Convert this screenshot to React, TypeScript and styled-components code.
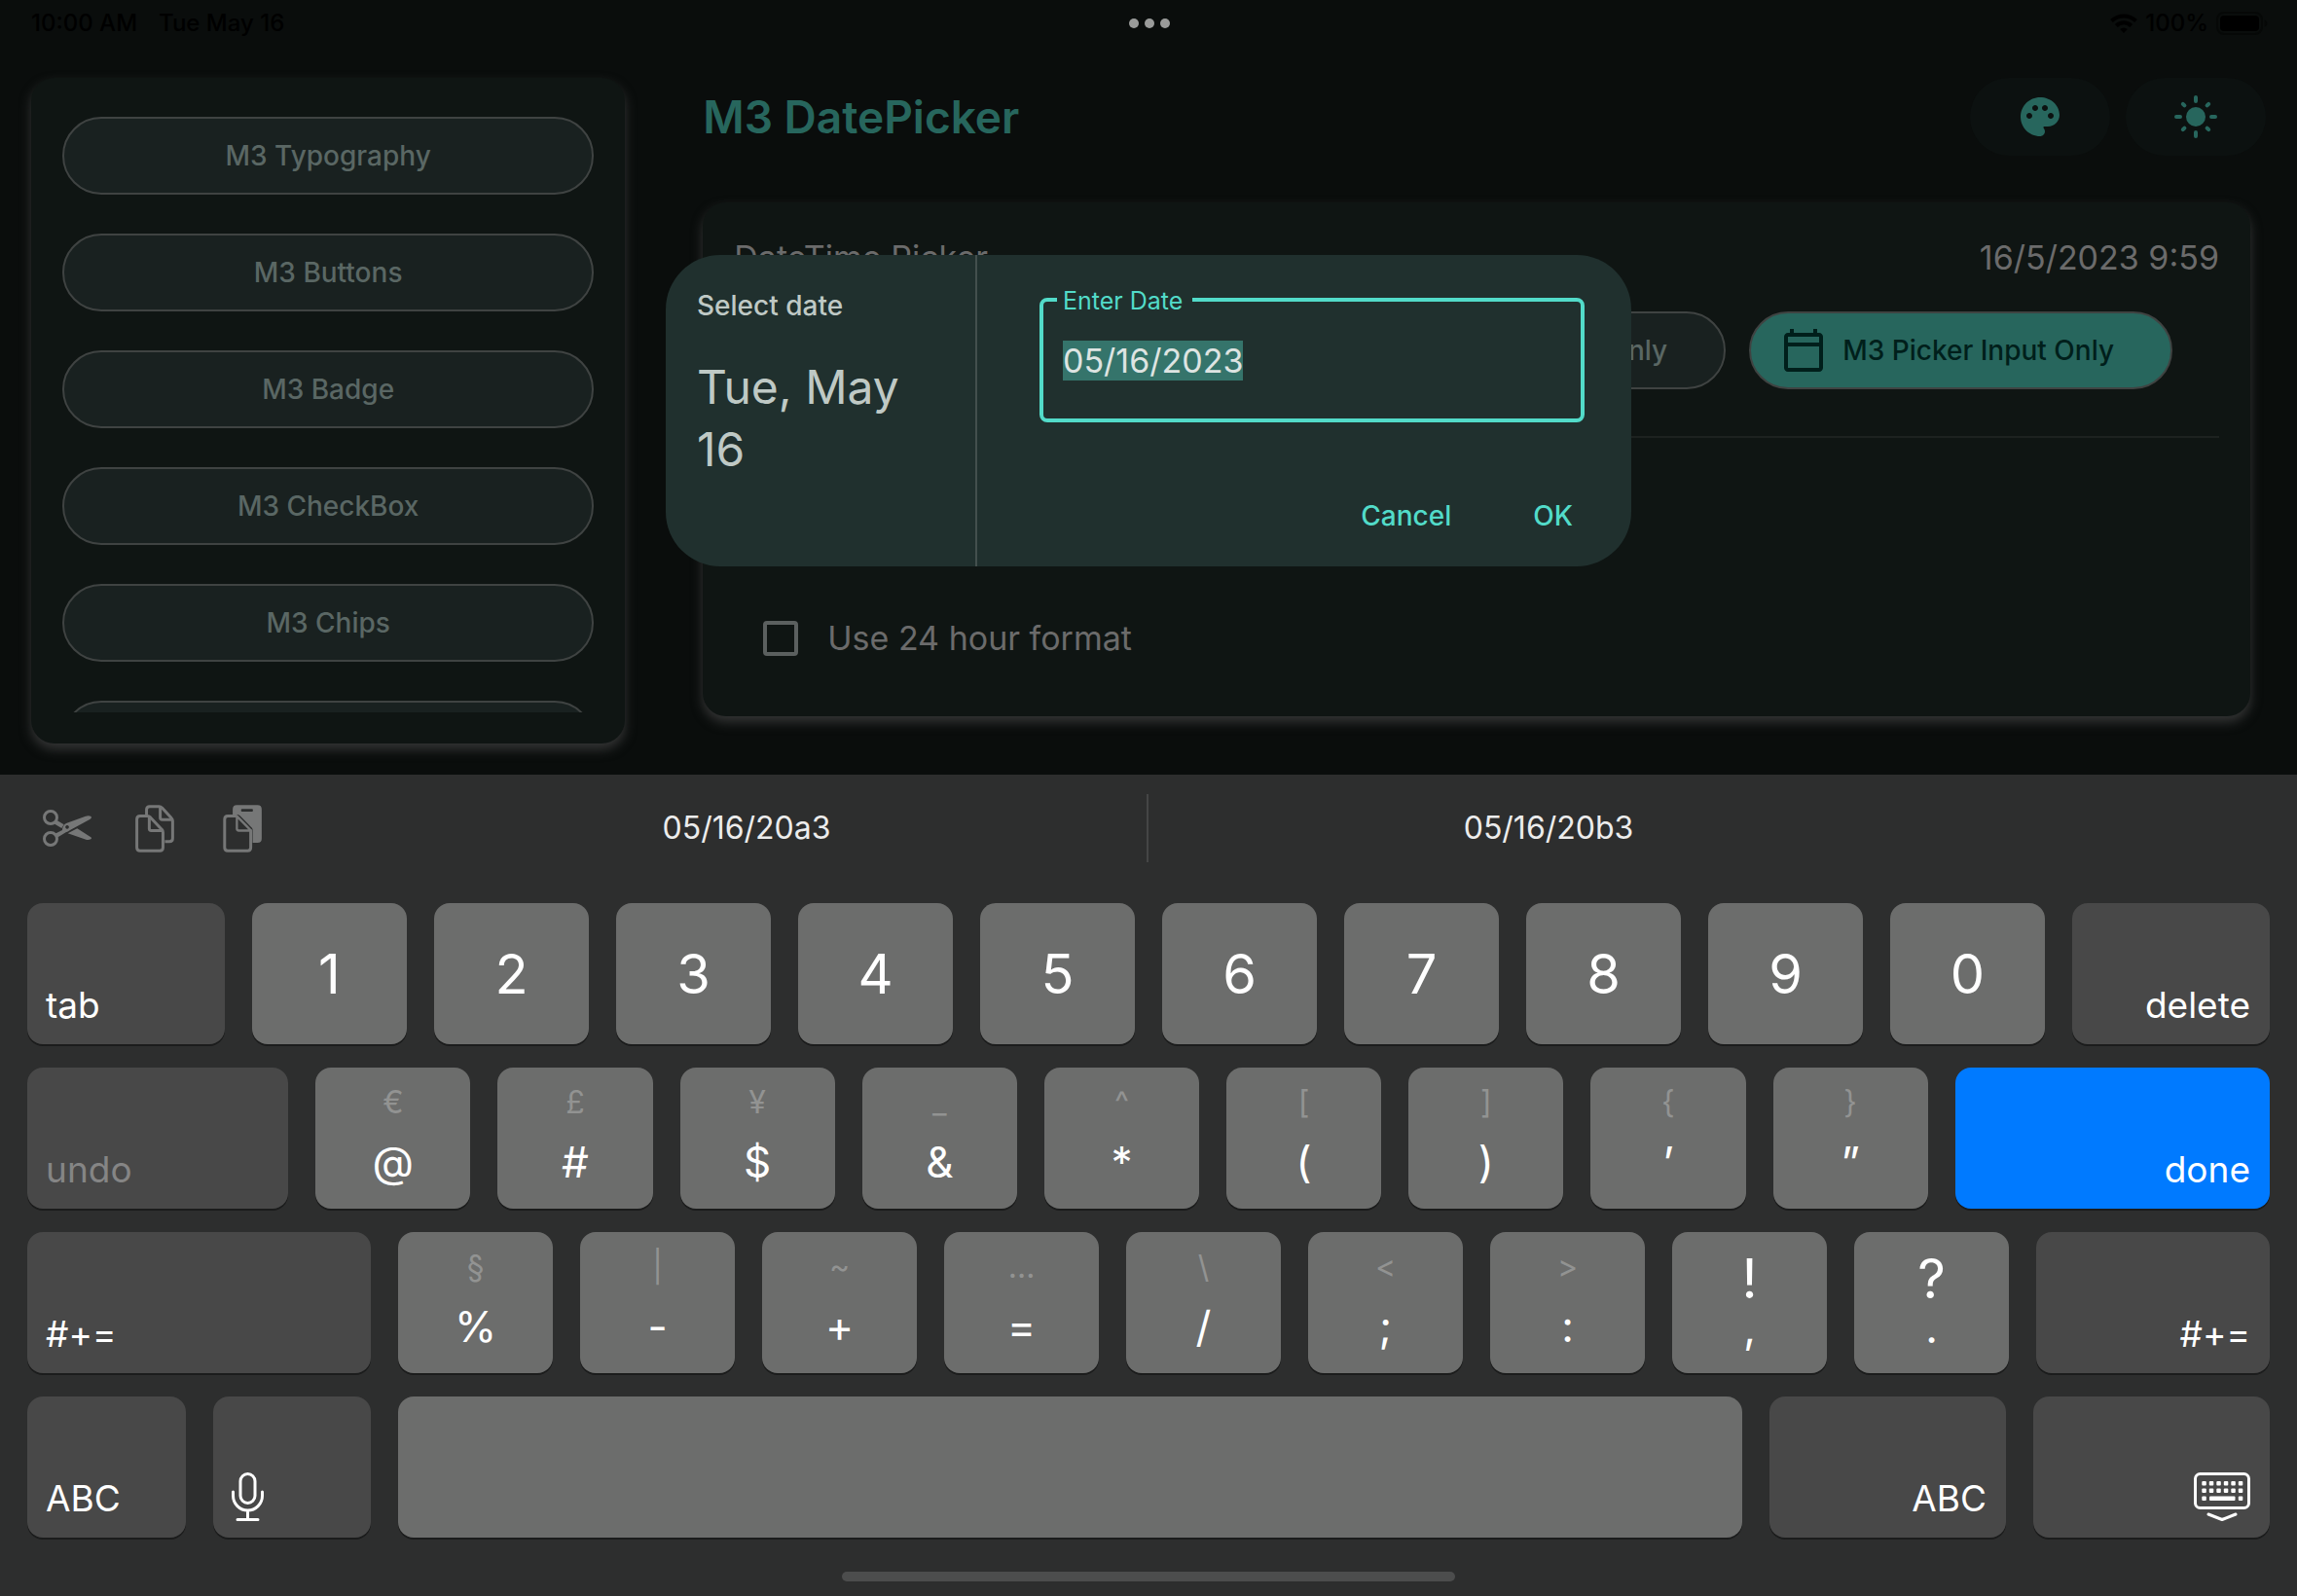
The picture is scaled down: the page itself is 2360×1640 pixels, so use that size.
import React, { useEffect, useRef } from "react";
import styled, { createGlobalStyle, css } from "styled-components";

const color = {
  page: "#0a0d0c",
  card: "#0f1513",
  pill: "#192120",
  outline: "#3f4342",
  muted: "#5a6764",
  body: "#6b6b6b",
  teal: "#27665d",
  onTeal: "#001f1b",
  dialog: "#20302e",
  accent: "#52dbc9",
  dialogText: "#bfc9c5",
  keyboard: "#2d2e2e",
  keyLight: "#6c6d6c",
  keyDark: "#484848",
};

const GlobalStyle = createGlobalStyle`
  * { box-sizing: border-box; }
  body {
    margin: 0;
    background: ${color.page};
    font-family: Inter, Roboto, "Liberation Sans", sans-serif;
  }
  button, input { font-family: inherit; }
  button { margin: 0; border: 0; padding: 0; cursor: pointer; }
`;

const Screen = styled.div`
  position: relative;
  display: grid;
  grid-template-rows: minmax(0, 1fr) auto;
  height: 100vh;
  overflow: hidden;
`;

const AppArea = styled.div`
  position: relative;
  display: flex;
  flex-direction: column;
  min-height: 0;
`;

/* Status bar */

const StatusBar = styled.header`
  display: grid;
  grid-template-columns: 1fr auto 1fr;
  align-items: center;
  height: 48px;
  padding: 0 30px 0 32px;
  color: #000;
  font-size: 24px;
  font-weight: 500;
  line-height: 32px;
`;

const StatusGroup = styled.div<{ $end?: boolean }>`
  display: flex;
  align-items: center;
  gap: ${(p) => (p.$end ? "8px" : "22px")};
  justify-content: ${(p) => (p.$end ? "flex-end" : "flex-start")};
`;

const Dots = styled.div`
  display: flex;
  gap: 6px;
  i {
    width: 10px;
    height: 10px;
    border-radius: 50%;
    background: #9a9b9a;
  }
`;

/* Page */

const Columns = styled.div`
  flex: 1;
  display: grid;
  grid-template-columns: 2fr 5fr;
  min-height: 0;
`;

const Sidebar = styled.nav`
  display: flex;
  min-height: 0;
  padding: 32px;
`;

const raised = css`
  background: ${color.card};
  border-radius: 24px;
  box-shadow: 0 6px 12px #343535;
`;

const SideCard = styled.div`
  ${raised}
  flex: 1;
  display: flex;
  min-height: 0;
  padding: 32px;
`;

const SideList = styled.div`
  flex: 1;
  display: flex;
  flex-direction: column;
  gap: 40px;
  padding-top: 8px;
  overflow: hidden;
`;

const Pill = styled.button<{ $selected?: boolean }>`
  display: flex;
  flex-shrink: 0;
  align-items: center;
  justify-content: center;
  gap: 16px;
  height: 80px;
  padding: 0 30px;
  border: 2px solid ${color.outline};
  border-radius: 40px;
  background: ${(p) => (p.$selected ? color.teal : color.pill)};
  color: ${(p) => (p.$selected ? color.onTeal : color.muted)};
  font-size: 28px;
  font-weight: 500;
  line-height: 40px;
  white-space: nowrap;
`;

const Chip = styled(Pill)`
  padding-right: 58px;
`;

const Main = styled.main`
  padding: 32px 48px;
`;

const PageHeader = styled.div`
  display: flex;
  align-items: center;
  gap: 16px;
  margin-right: -16px;
`;

const Title = styled.h1`
  flex: 1;
  margin: 0;
  color: ${color.teal};
  font-size: 46px;
  font-weight: 600;
  line-height: 56px;
`;

const IconButton = styled.button`
  display: flex;
  align-items: center;
  justify-content: center;
  width: 144px;
  height: 80px;
  border-radius: 40px;
  background: #0c1110;
  color: ${color.teal};
`;

const Panel = styled.section`
  ${raised}
  margin-top: 48px;
  padding: 32px;
`;

const PanelHead = styled.div`
  display: flex;
  justify-content: space-between;
  color: ${color.body};
  font-size: 34px;
  line-height: 50px;
`;

const ChipRow = styled.div`
  display: flex;
  justify-content: flex-end;
  gap: 24px;
  margin-top: 30px;
  padding-right: 48px;
`;

const Rule = styled.hr`
  height: 2px;
  margin: 48px 0 158px;
  border: 0;
  background: #1d2220;
`;

const CheckRow = styled.label`
  display: flex;
  align-items: center;
  gap: 30px;
  height: 96px;
  padding-left: 30px;
  color: ${color.body};
  font-size: 34px;
  line-height: 48px;
`;

const Checkbox = styled.input`
  appearance: none;
  width: 36px;
  height: 36px;
  margin: 0;
  border: 4px solid #5b605f;
  border-radius: 4px;
`;

/* Dialog */

const DialogLayer = styled.div`
  position: absolute;
  inset: 48px 0 0;
  display: flex;
  align-items: center;
  justify-content: center;
`;

const Dialog = styled.div`
  display: grid;
  grid-template-columns: 320px 1fr;
  width: min(992px, 100% - 64px);
  min-height: 320px;
  border-radius: 56px;
  background: ${color.dialog};
`;

const DialogSummary = styled.div`
  padding: 32px;
  border-right: 2px solid #434f4d;
  color: ${color.dialogText};
`;

const DialogCaption = styled.p`
  margin: 0 0 32px;
  font-size: 28px;
  font-weight: 500;
  line-height: 40px;
`;

const DialogDate = styled.p`
  margin: 0;
  font-size: 48px;
  line-height: 64px;
`;

const DialogForm = styled.form`
  display: flex;
  flex-direction: column;
  justify-content: space-between;
  padding: 44px 36px 16px 64px;
`;

const Field = styled.div`
  position: relative;
  margin-right: 12px;
`;

const FieldLabel = styled.label`
  position: absolute;
  top: -13px;
  left: 18px;
  padding: 0 10px 0 6px;
  background: ${color.dialog};
  color: ${color.accent};
  font-size: 25px;
  line-height: 32px;
`;

const FieldInput = styled.input`
  width: 100%;
  height: 128px;
  border: 4px solid ${color.accent};
  border-radius: 8px;
  padding: 0 20px;
  outline: none;
  background: transparent;
  color: #dee4e2;
  font-size: 34px;
  line-height: 38px;
  &::selection {
    background: #35746b;
    color: #dee4e2;
  }
`;

const DialogActions = styled.div`
  display: flex;
  justify-content: flex-end;
  gap: 36px;
`;

const TextButton = styled.button`
  height: 72px;
  padding: 0 24px;
  background: transparent;
  color: ${color.accent};
  font-size: 28px;
  font-weight: 500;
  line-height: 40px;
`;

/* Keyboard */

const Keyboard = styled.section`
  background: ${color.keyboard};
`;

const AssistBar = styled.div`
  display: grid;
  grid-template-columns: 356px 1fr 1fr 356px;
  align-items: center;
  height: 110px;
`;

const AssistTools = styled.div`
  display: flex;
  gap: 40px;
  padding-left: 44px;
`;

const ToolButton = styled.button`
  display: flex;
  align-items: center;
  justify-content: center;
  width: 50px;
  height: 50px;
  background: transparent;
  color: #767777;
`;

const Suggestion = styled.button<{ $divided?: boolean }>`
  height: 70px;
  border-right: 2px solid ${(p) => (p.$divided ? "#454646" : "transparent")};
  background: transparent;
  color: #ececec;
  font-size: 32px;
  line-height: 44px;
`;

const Keys = styled.div`
  display: grid;
  gap: 24px;
  padding: 22px 28px 35px;
`;

const KeyRow = styled.div<{ $columns: string }>`
  display: grid;
  grid-template-columns: ${(p) => p.$columns};
  gap: 28px;
`;

const keyBase = css`
  height: 145px;
  border-radius: 16px;
  box-shadow: 0 2px 0 #1b1c1c;
  color: #fff;
`;

const CharKey = styled.button`
  ${keyBase}
  background: ${color.keyLight};
  font-size: 56px;
  font-weight: 400;
  line-height: 64px;
`;

const DualKey = styled.button<{ $strong?: boolean }>`
  ${keyBase}
  display: grid;
  grid-template-rows: ${(p) => (p.$strong ? "60px 40px" : "44px 60px")};
  row-gap: ${(p) => (p.$strong ? "0" : "9px")};
  justify-items: center;
  align-content: start;
  padding-top: ${(p) => (p.$strong ? "18px" : "14px")};
  background: ${color.keyLight};
`;

const AltGlyph = styled.span<{ $strong?: boolean }>`
  color: ${(p) => (p.$strong ? "#fff" : "#929392")};
  font-size: ${(p) => (p.$strong ? "56px" : "32px")};
  font-weight: 400;
  line-height: ${(p) => (p.$strong ? "60px" : "44px")};
`;

const MainGlyph = styled.span<{ $strong?: boolean }>`
  font-size: 44px;
  font-weight: 400;
  line-height: ${(p) => (p.$strong ? "40px" : "60px")};
`;

const ActionKey = styled.button<{ $end?: boolean; $primary?: boolean }>`
  ${keyBase}
  display: flex;
  align-items: flex-end;
  justify-content: ${(p) => (p.$end ? "flex-end" : "flex-start")};
  padding: 0 20px 17px 19px;
  background: ${(p) => (p.$primary ? "#007aff" : color.keyDark)};
  font-size: 37px;
  line-height: 46px;
  &:disabled {
    color: #858585;
  }
`;

const HomeIndicator = styled.div`
  width: 630px;
  height: 10px;
  margin: 0 auto 15px;
  border-radius: 5px;
  background: #4c4d4d;
`;

/* Icons */

const WifiIcon = () => (
  <svg width="28" height="20" viewBox="0 0 28 20" fill="none" stroke="currentColor" strokeWidth="4" aria-hidden="true">
    <path d="M1.5 7.5a18 18 0 0 1 25 0" />
    <path d="M6.3 12.5a11 11 0 0 1 15.4 0" />
    <path d="M14 20l-3.8-4a5.5 5.5 0 0 1 7.6 0z" fill="currentColor" stroke="none" />
  </svg>
);

const BatteryIcon = () => (
  <svg width="53" height="24" viewBox="0 0 53 24" aria-hidden="true">
    <rect x="1" y="1" width="46" height="22" rx="7" fill="none" stroke="#060807" strokeWidth="2" />
    <rect x="4" y="4" width="40" height="16" rx="4" fill="#000" />
    <path d="M49.5 8.5c2 .5 3 2 3 3.5s-1 3-3 3.5z" fill="#060807" />
  </svg>
);

const PaletteIcon = () => (
  <svg width="48" height="48" viewBox="0 0 24 24" fill="currentColor" aria-hidden="true">
    <path d="M12 2C6.49 2 2 6.49 2 12s4.49 10 10 10c1.38 0 2.5-1.12 2.5-2.5 0-.61-.23-1.2-.64-1.67-.08-.1-.13-.21-.13-.33 0-.28.22-.5.5-.5H16c3.31 0 6-2.69 6-6 0-4.96-4.49-9-10-9zM6.5 13C5.67 13 5 12.33 5 11.5S5.67 10 6.5 10 8 10.67 8 11.5 7.33 13 6.5 13zm3-4C8.67 9 8 8.33 8 7.5S8.67 6 9.5 6s1.5.67 1.5 1.5S10.33 9 9.5 9zm5 0c-.83 0-1.5-.67-1.5-1.5S13.67 6 14.5 6s1.5.67 1.5 1.5S15.33 9 14.5 9zm3 4c-.83 0-1.5-.67-1.5-1.5s.67-1.5 1.5-1.5 1.5.67 1.5 1.5-.67 1.5-1.5 1.5z" />
  </svg>
);

const SunIcon = () => (
  <svg width="48" height="48" viewBox="0 0 24 24" fill="currentColor" stroke="currentColor" strokeWidth="2" strokeLinecap="round" aria-hidden="true">
    <circle cx="12" cy="12" r="5" stroke="none" />
    <path d="M12 2v2M12 20v2M2 12h2M20 12h2M5.4 5.4l.8.8M17.8 17.8l.8.8M5.4 18.6l.8-.8M17.8 6.2l.8-.8" />
  </svg>
);

const CalendarIcon = () => (
  <svg width="48" height="48" viewBox="0 0 24 24" fill="currentColor" aria-hidden="true">
    <path d="M20 3h-1V1h-2v2H7V1H5v2H4c-1.1 0-2 .9-2 2v16c0 1.1.9 2 2 2h16c1.1 0 2-.9 2-2V5c0-1.1-.9-2-2-2zm0 2v3H4V5zM4 21V10h16v11z" />
  </svg>
);

const CutIcon = () => (
  <svg width="50" height="38" viewBox="42 66 150 114" fill="none" stroke="currentColor" aria-hidden="true">
    <circle cx="66" cy="90" r="19.5" strokeWidth="9" />
    <circle cx="66" cy="156" r="19.5" strokeWidth="9" />
    <path d="M82 97l25 15-7 11-24-14z" fill="currentColor" stroke="none" />
    <path d="M119 139l29-15 42 27q4 3 0 6-8 4-15 1z" fill="currentColor" stroke="none" />
    <path
      fillRule="evenodd"
      d="M78 141l24-12q1-17 14-22l58-21q10-3 17 1 2 5-3 8l-62 34q-7 5-13 7l-28 17zM117 114a5.5 5.5 0 1 0 .1 0z"
      fill="currentColor"
      stroke="none"
    />
  </svg>
);

const CopyIcon = () => (
  <svg width="40" height="49" viewBox="330 50 120 148" fill="none" stroke="currentColor" strokeWidth="9" strokeLinejoin="round" aria-hidden="true">
    <path d="M364.5 84V65q0-10 10-10h29q5 0 9 4l29 32q4 4 4 9v54q0 10-10 10h-14" />
    <path d="M407 56v34q0 6 6 6h32" />
    <path d="M344.5 85h22q6 0 10 4l35 37q4 4 4 9v48q0 10-10 10h-61q-10 0-10-10V95q0-10 10-10z" />
    <path d="M373 87v37q0 6 6 6h36" />
  </svg>
);

const PasteIcon = () => (
  <svg width="40" height="49" viewBox="600 50 120 148" fill="none" stroke="currentColor" strokeWidth="9" strokeLinejoin="round" aria-hidden="true">
    <path
      fillRule="evenodd"
      stroke="none"
      fill="currentColor"
      d="M630 80V64q0-13 13-13h64q13 0 13 13v91q0 13-13 13h-15v-42q-1-4-6-8l-34-35q-3-3-10-3zM659 63q-3 0-3 4t3 4h31q3 0 3-4t-3-4z"
    />
    <path d="M643 85h-28q-10 0-10 10v88q0 10 10 10h61q10 0 10-10v-56" />
    <path d="M643 85v39q0 6 6 6h38z" strokeWidth="7" />
  </svg>
);

const MicIcon = () => (
  <svg width="33" height="50" viewBox="0 0 33 50" fill="none" stroke="currentColor" strokeWidth="3" strokeLinecap="round" aria-hidden="true">
    <rect x="9" y="1.5" width="15" height="30" rx="7.5" />
    <path d="M1.5 20v4a15 15 0 0 0 30 0v-4M16.5 39v9M6 48.5h21" />
  </svg>
);

const HideKeyboardIcon = () => {
  const columns = [8.3, 15.8, 23.3, 30.8, 38.3, 45.8];
  return (
    <svg width="58" height="50" viewBox="0 0 58 50" fill="currentColor" aria-hidden="true">
      <rect x="1.5" y="1.5" width="55" height="35" rx="5" fill="none" stroke="currentColor" strokeWidth="3" />
      {[9, 16.5].map((y) =>
        columns.map((x) => <rect key={`${x}-${y}`} x={x} y={y} width="4.5" height="4.5" rx="1" />)
      )}
      <rect x="8.3" y="24.5" width="4.5" height="4.5" rx="1" />
      <rect x="16" y="24.5" width="26.5" height="4.5" rx="1" />
      <rect x="45.8" y="24.5" width="4.5" height="4.5" rx="1" />
      <path d="M15 43l14 5.5 14-5.5" fill="none" stroke="currentColor" strokeWidth="3" strokeLinecap="round" strokeLinejoin="round" />
    </svg>
  );
};

/* Data */

const sections = ["M3 Typography", "M3 Buttons", "M3 Badge", "M3 CheckBox", "M3 Chips"];

const digits = ["1", "2", "3", "4", "5", "6", "7", "8", "9", "0"];

type KeyPair = { alt: string; main: string; strong?: boolean };

const symbolsUpper: KeyPair[] = [
  { alt: "€", main: "@" },
  { alt: "£", main: "#" },
  { alt: "¥", main: "$" },
  { alt: "_", main: "&" },
  { alt: "^", main: "*" },
  { alt: "[", main: "(" },
  { alt: "]", main: ")" },
  { alt: "{", main: "’" },
  { alt: "}", main: "”" },
];

const symbolsLower: KeyPair[] = [
  { alt: "§", main: "%" },
  { alt: "|", main: "-" },
  { alt: "~", main: "+" },
  { alt: "…", main: "=" },
  { alt: "\\", main: "/" },
  { alt: "<", main: ";" },
  { alt: ">", main: ":" },
  { alt: "!", main: ",", strong: true },
  { alt: "?", main: ".", strong: true },
];

const SymbolKeys = ({ keys }: { keys: KeyPair[] }) => (
  <>
    {keys.map((k) => (
      <DualKey key={k.main} type="button" $strong={k.strong}>
        <AltGlyph $strong={k.strong}>{k.alt}</AltGlyph>
        <MainGlyph $strong={k.strong}>{k.main}</MainGlyph>
      </DualKey>
    ))}
  </>
);

const DateDialog = () => {
  const input = useRef<HTMLInputElement>(null);
  useEffect(() => {
    input.current?.focus();
    input.current?.select();
  }, []);
  return (
    <DialogLayer>
      <Dialog role="dialog" aria-labelledby="dialog-caption">
        <DialogSummary>
          <DialogCaption id="dialog-caption">Select date</DialogCaption>
          <DialogDate>Tue, May 16</DialogDate>
        </DialogSummary>
        <DialogForm onSubmit={(e) => e.preventDefault()}>
          <Field>
            <FieldInput id="date" ref={input} type="text" defaultValue="05/16/2023" autoComplete="off" />
            <FieldLabel htmlFor="date">Enter Date</FieldLabel>
          </Field>
          <DialogActions>
            <TextButton type="button">Cancel</TextButton>
            <TextButton type="submit">OK</TextButton>
          </DialogActions>
        </DialogForm>
      </Dialog>
    </DialogLayer>
  );
};

export default function App() {
  return (
    <>
      <GlobalStyle />
      <Screen>
        <AppArea>
          <StatusBar>
            <StatusGroup>
              <span>10:00 AM</span>
              <span>Tue May 16</span>
            </StatusGroup>
            <Dots>
              <i />
              <i />
              <i />
            </Dots>
            <StatusGroup $end>
              <WifiIcon />
              <span>100%</span>
              <BatteryIcon />
            </StatusGroup>
          </StatusBar>
          <Columns>
            <Sidebar>
              <SideCard>
                <SideList>
                  {sections.map((name) => (
                    <Pill key={name} type="button">
                      {name}
                    </Pill>
                  ))}
                  <Pill type="button" aria-label="More" />
                </SideList>
              </SideCard>
            </Sidebar>
            <Main>
              <PageHeader>
                <Title>M3 DatePicker</Title>
                <IconButton type="button" aria-label="Theme color">
                  <PaletteIcon />
                </IconButton>
                <IconButton type="button" aria-label="Light mode">
                  <SunIcon />
                </IconButton>
              </PageHeader>
              <Panel>
                <PanelHead>
                  <span>DateTime Picker</span>
                  <span>16/5/2023 9:59</span>
                </PanelHead>
                <ChipRow>
                  <Chip type="button">
                    <CalendarIcon />
                    M3 Picker Calendar Only
                  </Chip>
                  <Chip type="button" $selected>
                    <CalendarIcon />
                    M3 Picker Input Only
                  </Chip>
                </ChipRow>
                <Rule />
                <CheckRow>
                  <Checkbox type="checkbox" />
                  Use 24 hour format
                </CheckRow>
              </Panel>
            </Main>
          </Columns>
          <DateDialog />
        </AppArea>
        <Keyboard aria-label="Keyboard">
          <AssistBar>
            <AssistTools>
              <ToolButton type="button" aria-label="Cut">
                <CutIcon />
              </ToolButton>
              <ToolButton type="button" aria-label="Copy">
                <CopyIcon />
              </ToolButton>
              <ToolButton type="button" aria-label="Paste">
                <PasteIcon />
              </ToolButton>
            </AssistTools>
            <Suggestion type="button" $divided>
              05/16/20a3
            </Suggestion>
            <Suggestion type="button">05/16/20b3</Suggestion>
          </AssistBar>
          <Keys>
            <KeyRow $columns="203fr repeat(10, 159fr) 203fr">
              <ActionKey type="button">tab</ActionKey>
              {digits.map((d) => (
                <CharKey key={d} type="button">
                  {d}
                </CharKey>
              ))}
              <ActionKey type="button" $end>
                delete
              </ActionKey>
            </KeyRow>
            <KeyRow $columns="268fr repeat(9, 159fr) 323fr">
              <ActionKey type="button" disabled>
                undo
              </ActionKey>
              <SymbolKeys keys={symbolsUpper} />
              <ActionKey type="button" $end $primary>
                done
              </ActionKey>
            </KeyRow>
            <KeyRow $columns="353fr repeat(9, 159fr) 240fr">
              <ActionKey type="button">#+=</ActionKey>
              <SymbolKeys keys={symbolsLower} />
              <ActionKey type="button" $end>
                #+=
              </ActionKey>
            </KeyRow>
            <KeyRow $columns="163fr 162fr 1382fr 243fr 243fr">
              <ActionKey type="button">ABC</ActionKey>
              <ActionKey type="button" aria-label="Dictate">
                <MicIcon />
              </ActionKey>
              <CharKey type="button" aria-label="Space" />
              <ActionKey type="button" $end>
                ABC
              </ActionKey>
              <ActionKey type="button" $end aria-label="Hide keyboard">
                <HideKeyboardIcon />
              </ActionKey>
            </KeyRow>
          </Keys>
          <HomeIndicator />
        </Keyboard>
      </Screen>
    </>
  );
}
